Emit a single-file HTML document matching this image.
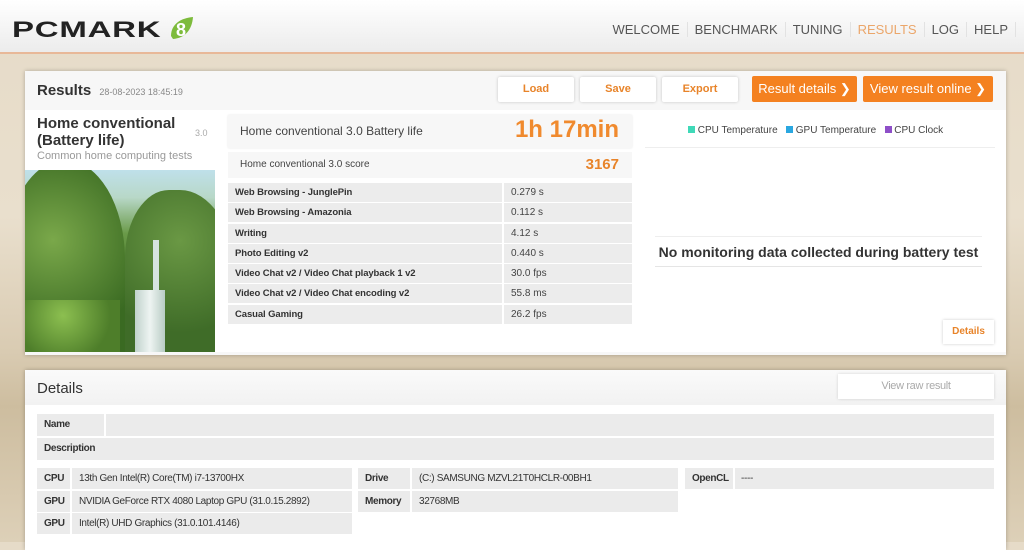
<!DOCTYPE html>
<html><head><meta charset="utf-8"><style>
*{margin:0;padding:0;box-sizing:border-box}
body{width:1024px;height:542px;overflow:hidden;font-family:"Liberation Sans",sans-serif;color:#333;position:relative;
background:linear-gradient(180deg,#e6dbc8 0%,#e9dfcd 40%,#d9cbb2 65%,#cdbd9f 75%,#ddd0b8 100%)}
.hdr{position:absolute;left:0;top:0;width:1024px;height:54px;background:linear-gradient(#fff,#ececec);border-bottom:2px solid #e8b898}
.logo{position:absolute;left:12px;top:17px;font:900 22px "Liberation Sans",sans-serif;letter-spacing:0.5px;color:#222;transform:scaleX(1.5);transform-origin:left}
.nav{position:absolute;right:0;top:22px;font-size:13px;color:#555;display:flex}
.nav span{padding:0 7px;border-left:1px solid #e2e2e2}
.panel{position:absolute;left:25px;width:981px;background:#fff;box-shadow:0 0 4px rgba(0,0,0,.25)}
.btn{position:absolute;top:77px;height:25px;background:#fff;border-radius:2px;box-shadow:0 0 3px rgba(0,0,0,.2);font:bold 11px "Liberation Sans",sans-serif;color:#e8842a;text-align:center;line-height:25px}
.obtn{position:absolute;top:76px;height:26px;background:#f48120;color:#fff;font-size:13px;text-align:center;line-height:26px;border-radius:2px}
.row{position:absolute;left:228px;height:19px;background:#ececec;font-size:9.5px;letter-spacing:-0.1px;font-weight:bold;color:#333;line-height:19px;padding-left:7px;width:274px}
.val{position:absolute;left:504px;height:19px;width:128px;background:#ececec;font-size:10px;line-height:19px;padding-left:7px;color:#444}
.n{letter-spacing:-0.35px}
.dl{position:absolute;height:21px;background:#ebebeb;font-size:10px;line-height:21px;color:#333}
.dl b{display:inline-block;padding-left:7px}
</style></head><body>
<div class="hdr">
<div class="logo">PCMARK</div>
<svg style="position:absolute;left:167px;top:14px" width="28" height="28" viewBox="0 0 28 28"><path d="M4 22 C4 10 14 4 26 3 C25 16 18 24 6 25Z" fill="#7dbb3c"/><text x="9" y="22" font-family="Liberation Sans" font-weight="bold" font-size="18" fill="#fff">8</text></svg>
<div class="nav"><span style="border:0">WELCOME</span><span>BENCHMARK</span><span>TUNING</span><span style="color:#eba66a">RESULTS</span><span>LOG</span><span>HELP</span><span style="padding:0 4px"></span></div>
</div>

<div class="panel" style="top:71px;height:284px;background:#f7f7f7"></div>
<div style="position:absolute;left:37px;top:82px;font-size:15px;font-weight:bold;color:#333">Results <span style="font-size:9px;font-weight:normal;color:#888;margin-left:4px">28-08-2023 18:45:19</span></div>
<div class="btn" style="left:498px;width:76px">Load</div>
<div class="btn" style="left:580px;width:76px">Save</div>
<div class="btn" style="left:662px;width:76px">Export</div>
<div class="obtn" style="left:752px;width:105px">Result details ❯</div>
<div class="obtn" style="left:863px;width:130px">View result online ❯</div>

<div style="position:absolute;left:25px;top:110px;width:190px;height:242px;background:#fff"></div>
<div style="position:absolute;left:37px;top:115px;font-size:15px;font-weight:bold;color:#333;line-height:17px">Home conventional<br>(Battery life)</div>
<div style="position:absolute;left:195px;top:128px;font-size:9px;color:#aaa">3.0</div>
<div style="position:absolute;left:37px;top:150px;font-size:11px;color:#999">Common home computing tests</div>
<div style="position:absolute;left:25px;top:170px;width:190px;height:182px;overflow:hidden;background:linear-gradient(180deg,#bfe0ea 0%,#b8d8c8 15%,#6a9a48 35%,#4a7a2e 60%,#3e6a2a 100%)">
<div style="position:absolute;left:-20px;top:-10px;width:120px;height:200px;border-radius:50% 50% 0 0;background:radial-gradient(circle at 40% 40%,#7aa84a,#3a6a22 70%)"></div>
<div style="position:absolute;left:100px;top:20px;width:110px;height:170px;border-radius:40% 50% 0 0;background:radial-gradient(circle at 50% 30%,#6a9844,#3f6c28 70%)"></div>
<div style="position:absolute;left:128px;top:70px;width:6px;height:90px;background:#d6e4e0"></div>
<div style="position:absolute;left:110px;top:120px;width:30px;height:62px;background:linear-gradient(90deg,#c0d2cc,#eef4f2,#b8ccc4)"></div>
<div style="position:absolute;left:0;top:130px;width:95px;height:52px;background:radial-gradient(circle at 40% 30%,#8cbf50,#4e7e2a 70%)"></div>
</div>

<div style="position:absolute;left:215px;top:110px;width:430px;height:242px;background:#fff"></div>
<div style="position:absolute;left:228px;top:115px;width:404px;height:33px;background:#f7f7f7;box-shadow:0 0 2px rgba(0,0,0,.1)"></div>
<div style="position:absolute;left:240px;top:124px;font-size:12px;color:#444">Home conventional 3.0 Battery life</div>
<div style="position:absolute;right:405px;top:116px;font-size:24px;font-weight:bold;color:#f08a2e">1h 17min</div>
<div style="position:absolute;left:228px;top:152px;width:404px;height:26px;background:#f7f7f7"></div>
<div style="position:absolute;left:240px;top:159px;font-size:10px;color:#444">Home conventional 3.0 score</div>
<div style="position:absolute;right:405px;top:156px;font-size:15px;font-weight:bold;color:#e8842a">3167</div>

<div class="row" style="top:183px">Web Browsing - JunglePin</div><div class="val" style="top:183px">0.279 s</div>
<div class="row" style="top:203px">Web Browsing - Amazonia</div><div class="val" style="top:203px">0.112 s</div>
<div class="row" style="top:224px">Writing</div><div class="val" style="top:224px">4.12 s</div>
<div class="row" style="top:244px">Photo Editing v2</div><div class="val" style="top:244px">0.440 s</div>
<div class="row" style="top:264px">Video Chat v2 / Video Chat playback 1 v2</div><div class="val" style="top:264px">30.0 fps</div>
<div class="row" style="top:284px">Video Chat v2 / Video Chat encoding v2</div><div class="val" style="top:284px">55.8 ms</div>
<div class="row" style="top:305px">Casual Gaming</div><div class="val" style="top:305px">26.2 fps</div>

<div style="position:absolute;left:645px;top:110px;width:361px;height:242px;background:#fff"></div>
<div style="position:absolute;left:688px;top:125px;font-size:10px;color:#444">
<span style="display:inline-block;width:7px;height:7px;background:#3fd9b8"></span> CPU Temperature &nbsp;&nbsp;<span style="display:inline-block;width:7px;height:7px;background:#2aa7e0"></span> GPU Temperature &nbsp;&nbsp;<span style="display:inline-block;width:7px;height:7px;background:#8e4fc8"></span> CPU Clock</div>
<div style="position:absolute;left:645px;top:147px;width:350px;height:1px;background:#eee"></div>
<div style="position:absolute;left:655px;top:236px;width:327px;height:1px;background:#eee"></div>
<div style="position:absolute;left:655px;top:244px;width:327px;text-align:center;font-size:14px;font-weight:bold;color:#333">No monitoring data collected during battery test</div>
<div style="position:absolute;left:655px;top:266px;width:327px;height:1px;background:#e5e5e5"></div>
<div style="position:absolute;left:943px;top:320px;width:51px;height:24px;background:#fff;box-shadow:0 0 3px rgba(0,0,0,.2);font-size:10px;font-weight:bold;color:#e8842a;text-align:center;line-height:24px">Details</div>

<div class="panel" style="top:370px;height:180px"></div>
<div style="position:absolute;left:25px;top:370px;width:981px;height:35px;background:linear-gradient(#fafafa,#f2f2f2)"></div>
<div style="position:absolute;left:37px;top:380px;font-size:15px;color:#333">Details</div>
<div class="n" style="position:absolute;left:838px;top:374px;width:156px;height:25px;background:#fff;box-shadow:0 0 3px rgba(0,0,0,.15);font-size:11px;color:#aaa;text-align:center;line-height:25px">View raw result</div>
<div class="dl n" style="left:37px;top:414px;width:957px;height:22px"><b>Name</b></div>
<div style="position:absolute;left:104px;top:414px;width:2px;height:46px;background:#fff"></div>
<div class="dl n" style="left:37px;top:438px;width:957px;height:22px"><b>Description</b></div>
<div class="dl n" style="left:37px;top:468px;width:315px"><b style="width:42px">CPU</b>13th Gen Intel(R) Core(TM) i7-13700HX</div>
<div class="dl n" style="left:37px;top:491px;width:315px"><b style="width:42px">GPU</b>NVIDIA GeForce RTX 4080 Laptop GPU (31.0.15.2892)</div>
<div class="dl n" style="left:37px;top:513px;width:315px"><b style="width:42px">GPU</b>Intel(R) UHD Graphics (31.0.101.4146)</div>
<div class="dl n" style="left:358px;top:468px;width:320px"><b style="width:61px">Drive</b>(C:) SAMSUNG MZVL21T0HCLR-00BH1</div>
<div class="dl n" style="left:358px;top:491px;width:320px"><b style="width:61px">Memory</b>32768MB</div>
<div class="dl n" style="left:685px;top:468px;width:309px"><b style="width:56px">OpenCL</b>----</div>
<div style="position:absolute;left:70px;top:468px;width:2px;height:66px;background:#fff"></div>
<div style="position:absolute;left:410px;top:468px;width:2px;height:44px;background:#fff"></div>
<div style="position:absolute;left:733px;top:468px;width:2px;height:21px;background:#fff"></div>
</body></html>
